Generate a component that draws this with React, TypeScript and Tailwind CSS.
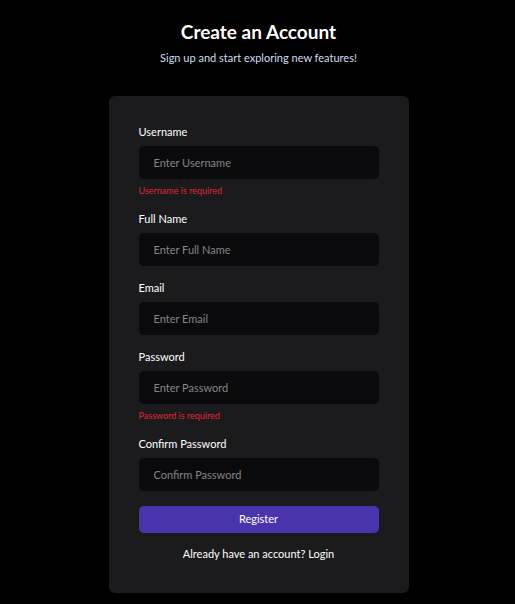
import React from "react";

const font = { fontFamily: "Lato, 'Open Sans', sans-serif" };

function Field({ label, placeholder, error }: { label: string; placeholder: string; error?: string }) {
  return (
    <div className="flex flex-col">
      <label className="text-[11px] leading-[14px] text-white mb-[7px]">{label}</label>
      <input
        placeholder={placeholder}
        className="h-[33px] w-full rounded-[5px] bg-[#0a0a0c] px-[15px] text-[11px] text-white placeholder:text-[#85858a] outline-none"
        style={font}
      />
      {error && <div className="mt-[5px] text-[9px] leading-[13px] text-[#e0262c]">{error}</div>}
    </div>
  );
}

export default function App() {
  return (
    <div className="min-h-[604px] w-full bg-black flex flex-col items-center pl-[2px]" style={font}>
      <h1 className="mt-[20px] text-[19px] leading-[24px] font-bold text-white">Create an Account</h1>
      <p className="mt-[7px] text-[11px] leading-[14px] text-[#cddff0]">Sign up and start exploring new features!</p>
      <div className="mt-[31px] w-[300px] rounded-[6px] bg-[#1b1b1d] px-[30px] pt-[29px] pb-[32px] flex flex-col gap-[15px]">
        <Field label="Username" placeholder="Enter Username" error="Username is required" />
        <Field label="Full Name" placeholder="Enter Full Name" />
        <Field label="Email" placeholder="Enter Email" />
        <Field label="Password" placeholder="Enter Password" error="Password is required" />
        <Field label="Confirm Password" placeholder="Confirm Password" />
        <button className="h-[27px] w-full rounded-[5px] bg-[#4934ae] text-[11px] text-white" style={font}>
          Register
        </button>
        <p className="-mt-[1px] text-center text-[11px] leading-[14px] text-white">Already have an account? Login</p>
      </div>
    </div>
  );
}
